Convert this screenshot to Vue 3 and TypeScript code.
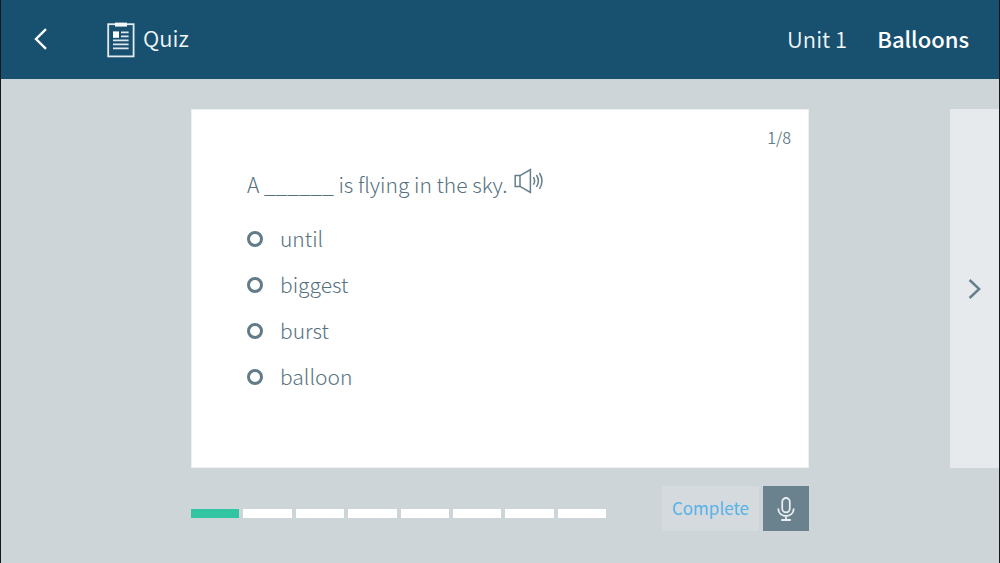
<script setup lang="ts">
import { ref } from 'vue'

const options: string[] = ['until', 'biggest', 'burst', 'balloon']
const total = 8
const current = ref(1)
const answer = ref('')
</script>

<template>
  <div class="page">
    <header class="bar">
      <button class="back" type="button" aria-label="Back">
        <svg width="14" height="22" viewBox="0 0 14 22" fill="none" stroke="currentColor" stroke-width="2.4">
          <path d="M12 1.2 2 11l10 9.8" />
        </svg>
      </button>
      <h1 class="title">
        <svg width="28" height="36" viewBox="0 0 28 36" fill="none" aria-hidden="true">
          <rect x="1.2" y="2.2" width="25.4" height="32.2" stroke="#e3ebf0" stroke-width="1.8" />
          <rect x="8" y="0.6" width="12" height="4" fill="#f4f8fa" />
          <rect x="6" y="9.4" width="6" height="6.4" fill="#fff" />
          <path
            d="M14 10.3h7.6M14 14.4h7.6M6 18.4h15.6M6 22.4h15.6M6 26.3h15.6"
            stroke="#dce6ec"
            stroke-width="1.7"
          />
        </svg>
        <span>Quiz</span>
      </h1>
      <div class="unit">
        <span>Unit 1</span>
        <strong>Balloons</strong>
      </div>
    </header>

    <main class="stage">
      <section class="card">
        <p class="count">{{ current }}/{{ total }}</p>
        <div class="question">
          <p id="question">A ______ is flying in the sky.</p>
          <button class="listen" type="button" aria-label="Listen">
            <svg width="30" height="26" viewBox="0 0 30 26" fill="none" stroke="currentColor" stroke-width="1.5">
              <path d="M6 7.6H1.2v10.8H6M6 7.6v10.8M6 7.6 16.4 1.6v22.8L6 18.4" />
              <path d="M19.4 9.2q2.4 3.7 0 7.4M22.4 7q4 5.9 0 11.8M25.4 5q5.2 7.9 0 15.8" />
            </svg>
          </button>
        </div>
        <div class="options" role="radiogroup" aria-labelledby="question">
          <label v-for="option in options" :key="option" class="option">
            <input v-model="answer" type="radio" name="answer" :value="option" />
            <span>{{ option }}</span>
          </label>
        </div>
      </section>

      <button class="next" type="button" aria-label="Next question">
        <svg width="14" height="20" viewBox="0 0 14 20" fill="none" stroke="currentColor" stroke-width="2.4">
          <path d="m1.6 1 9.6 9-9.6 9" />
        </svg>
      </button>

      <div class="tools">
        <div class="progress" role="progressbar" aria-label="Progress" :aria-valuenow="current" aria-valuemin="0" :aria-valuemax="total">
          <span v-for="n in total" :key="n" class="step" :class="{ done: n <= current }"></span>
        </div>
        <button class="complete" type="button">Complete</button>
        <button class="mic" type="button" aria-label="Record">
          <svg width="18" height="24" viewBox="0 0 18 24" fill="none" stroke="currentColor" stroke-width="1.8">
            <rect x="5.2" y="1" width="7.6" height="14.4" rx="3.8" />
            <path d="M1.4 11.4v1.2a7.6 6.4 0 0 0 15.2 0v-1.2M9 19v4M4.2 23h9.6" />
          </svg>
        </button>
      </div>
    </main>
  </div>
</template>

<style>
body {
  margin: 0;
}
</style>

<style scoped>
.page {
  box-sizing: border-box;
  display: flex;
  flex-direction: column;
  min-height: 100vh;
  border: solid #14181b;
  border-width: 0 1px;
  background: #ced5d9;
  color: #647e8c;
  font-family: "Noto Sans CJK SC", "Noto Sans", sans-serif;
  font-weight: 350;
  font-size: 21px;
  line-height: 30px;
}

button {
  display: flex;
  align-items: center;
  justify-content: center;
  margin: 0;
  padding: 0;
  border: 0;
  background: none;
  color: inherit;
  font: inherit;
  cursor: pointer;
}

p {
  margin: 0;
}

.bar {
  box-sizing: border-box;
  display: flex;
  align-items: center;
  height: 79px;
  padding: 0 30px;
  background: #18506f;
  color: #f1f6f8;
}

.back {
  width: 20px;
  height: 30px;
  padding-bottom: 2px;
  color: #fff;
}

.title {
  display: flex;
  align-items: center;
  gap: 8px;
  margin: 0 0 0 56px;
  font-size: 22px;
  font-weight: inherit;
}

.title span {
  padding-bottom: 5px;
}

.unit {
  display: flex;
  gap: 30px;
  margin-left: auto;
  padding-bottom: 3px;
  font-size: 22px;
}

.unit strong {
  color: #fff;
  font-weight: 500;
}

.stage {
  display: grid;
  grid-template-columns: 190fr 618fr 141fr 49fr;
  row-gap: 18px;
  padding-top: 30px;
}

.card {
  grid-column: 2;
  box-sizing: border-box;
  padding: 14px 17px 76px 55px;
  border: 1px solid #edf0f1;
  background: #fff;
}

.count {
  font-size: 16px;
  line-height: 26px;
  text-align: right;
}

.question {
  display: flex;
  align-items: center;
  gap: 6px;
  margin-top: 18px;
  color: #557180;
  font-weight: 300;
}

.listen {
  margin-bottom: 5px;
  color: #647e8c;
}

.options {
  display: flex;
  flex-direction: column;
  gap: 16px;
  margin-top: 24px;
  color: #557180;
  font-weight: 300;
}

.option {
  display: flex;
  align-items: center;
  gap: 17px;
  cursor: pointer;
}

.option input {
  appearance: none;
  box-sizing: border-box;
  width: 16px;
  height: 16px;
  margin: 2px 0 0;
  border: 3px solid #617b89;
  border-radius: 50%;
}

.option input:checked {
  background: #32c5a2;
}

.next {
  grid-column: 4;
  background: #e6eaed;
}

.tools {
  grid-column: 2;
  display: flex;
  align-items: center;
}

.progress {
  flex: 1;
  display: flex;
  gap: 4px;
  margin: 9px 56px 0 0;
}

.step {
  flex: 1;
  height: 9px;
  background: #fff;
}

.step.done {
  background: #32c5a2;
}

.complete {
  width: 97px;
  height: 45px;
  margin-right: 4px;
  padding-bottom: 2px;
  background: #d4dade;
  color: #57b2e7;
  font-size: 17px;
  font-weight: 400;
}

.mic {
  width: 46px;
  height: 45px;
  background: #6a818e;
  color: #e9eef1;
}
</style>
